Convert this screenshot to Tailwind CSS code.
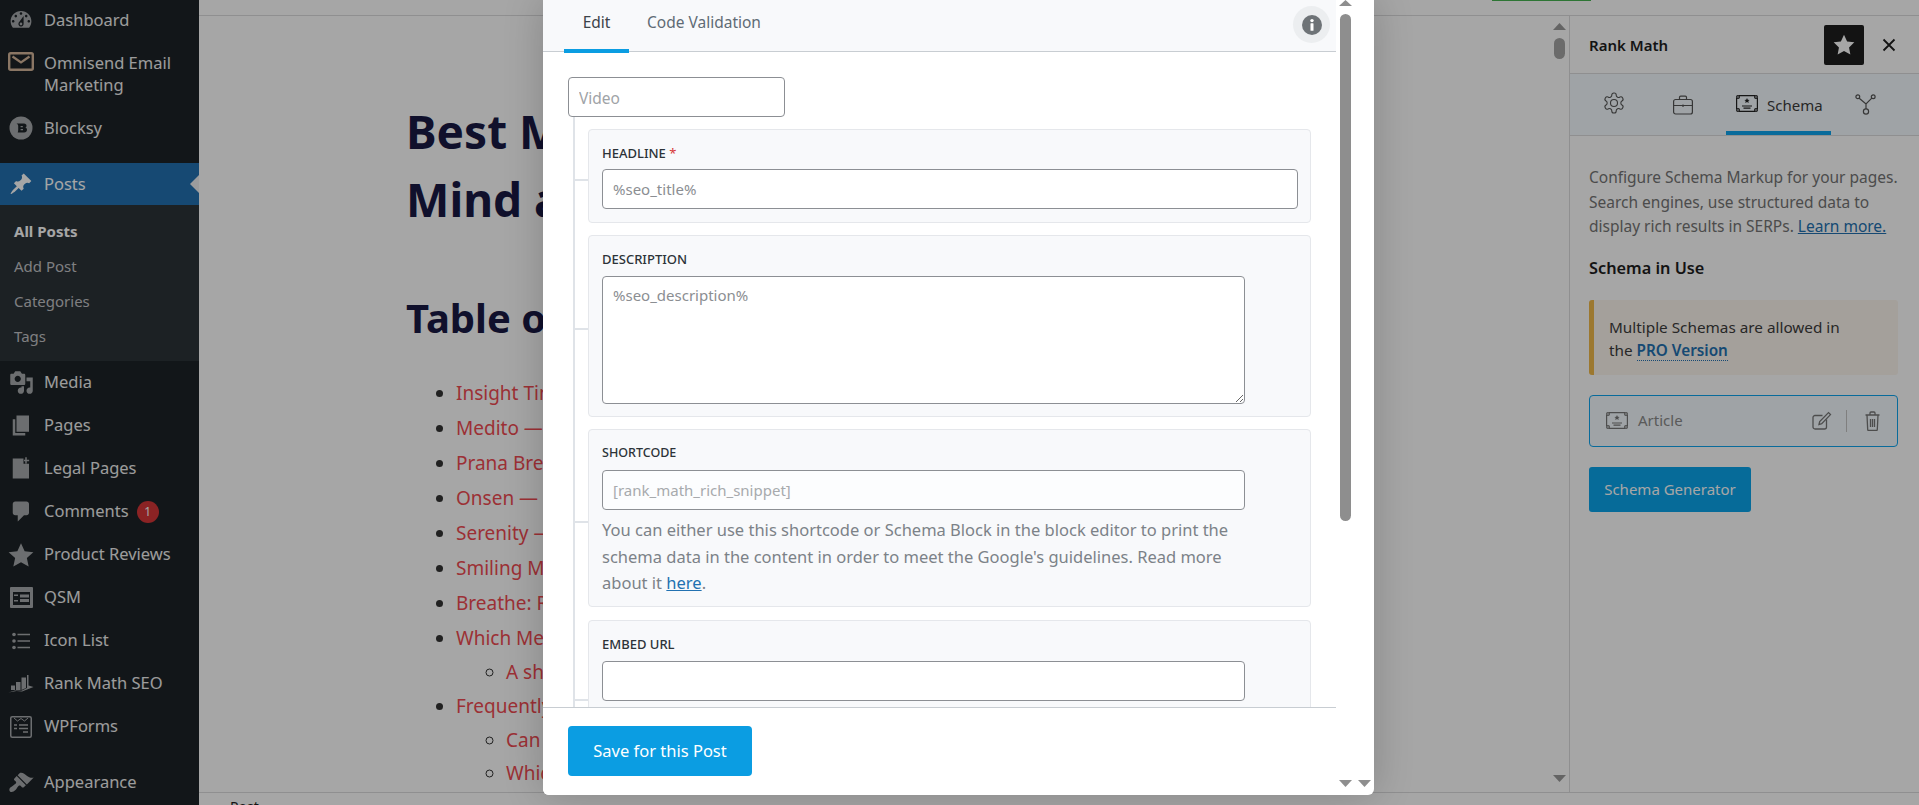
<!DOCTYPE html>
<html lang="en">
<head>
    <meta charset="UTF-8">
    <meta name="viewport" content="width=device-width, initial-scale=1.0">
    <title>Edit Post - Rank Math Schema</title>
    <script src="https://cdn.jsdelivr.net/npm/@tailwindcss/browser@4"></script>
</head>
<body class="h-[805px] overflow-hidden bg-white font-['Noto_Sans',sans-serif]">
<div class="relative flex h-[805px] w-[1919px] overflow-hidden">

    <!-- Admin menu -->
    <aside class="h-full w-[199px] shrink-0 overflow-hidden bg-[#1d2327] text-[16.5px] text-[#f0f0f0]">
        <a class="flex h-[40px] items-center">
            <span class="mr-[2px] flex w-[42px] justify-center"><svg class="h-[26px] w-[26px] fill-[#a7aaad]" viewBox="0 0 20 20"><path d="M3.76 16h12.48c1.1-1.37 1.76-3.11 1.76-5 0-4.42-3.58-8-8-8s-8 3.58-8 8c0 1.89.66 3.63 1.76 5zM10 4c.55 0 1 .45 1 1s-.45 1-1 1-1-.45-1-1 .45-1 1-1zM6 6c.55 0 1 .45 1 1s-.45 1-1 1-1-.45-1-1 .45-1 1-1zm8 0c.55 0 1 .45 1 1s-.45 1-1 1-1-.45-1-1 .45-1 1-1zm-5.37 5.55L12 7v6c0 1.1-.9 2-2 2s-2-.9-2-2c0-.57.24-1.08.63-1.45zM4 10c.55 0 1 .45 1 1s-.45 1-1 1-1-.45-1-1 .45-1 1-1zm12 0c.55 0 1 .45 1 1s-.45 1-1 1-1-.45-1-1 .45-1 1-1zm-5 3c0-.55-.45-1-1-1s-1 .45-1 1 .45 1 1 1 1-.45 1-1z"/></svg></span>
            Dashboard
        </a>
        <a class="mt-[2px] flex h-[64px] items-center leading-[22px]">
            <span class="mr-[2px] flex w-[42px] justify-center self-start pt-[10px]"><svg class="h-[19px] w-[26px]" viewBox="0 0 26 19" fill="none" stroke="#d4b69a"><rect x="1.2" y="1.2" width="23.6" height="16.6" rx="1.5" stroke-width="2.4"/><path d="M4.5 4.5 13 10.5 21.5 4.5" stroke-width="2.2"/></svg></span>
            <span>Omnisend Email<br>Marketing</span>
        </a>
        <a class="flex h-[44px] items-center">
            <span class="mr-[2px] flex w-[42px] justify-center"><svg class="h-[24px] w-[24px]" viewBox="0 0 24 24"><circle cx="12" cy="12" r="11.5" fill="#a7aaad"/><path d="M7.5 7.5h7.5c1.6 0 2.5 1 2.5 2.2 0 .9-.5 1.6-1.2 1.9 1 .3 1.7 1.1 1.7 2.2 0 1.5-1.1 2.7-2.8 2.7H8.7c.3-.8.5-1.6.5-2.4V9.8c0-.9-.6-1.7-1.7-2.3z" fill="#1d2327"/><path d="M11.6 10h2.2v1.2h-2.2zM11.6 13h2.4v1.3h-2.4z" fill="#a7aaad"/></svg></span>
            Blocksy
        </a>
        <a class="relative mt-[13px] flex h-[42px] items-center bg-[#2271b1] text-white">
            <span class="mr-[2px] flex w-[42px] justify-center"><svg class="h-[24px] w-[24px] fill-white" viewBox="0 0 20 20"><path d="M10.44 3.02l1.82-1.82 6.36 6.35-1.83 1.82c-1.05-.68-2.48-.57-3.41.36l-.75.75c-.92.93-1.04 2.35-.35 3.41l-1.83 1.82-2.41-2.41-2.8 2.79c-.42.42-3.38 2.71-3.8 2.29s1.86-3.39 2.28-3.81l2.79-2.79L4.1 9.36l1.83-1.82c1.05.69 2.48.57 3.4-.36l.75-.75c.93-.92 1.05-2.35.36-3.41z"/></svg></span>
            Posts
            <span class="absolute right-0 top-[12px] h-0 w-0 border-y-[9px] border-r-[9px] border-y-transparent border-r-[#f0f0f1]"></span>
        </a>
        <div class="bg-[#2c3338] pb-[7px] pt-[9px] text-[15px] text-[#c3c4c7]">
            <a class="block pl-[14px] font-bold leading-[35px] text-white">All Posts</a>
            <a class="block pl-[14px] leading-[35px]">Add Post</a>
            <a class="block pl-[14px] leading-[35px]">Categories</a>
            <a class="block pl-[14px] leading-[35px]">Tags</a>
        </div>
        <a class="flex h-[43px] items-center">
            <span class="mr-[2px] flex w-[42px] justify-center"><svg class="h-[25px] w-[25px] fill-[#a7aaad]" viewBox="0 0 20 20"><path d="M13 11V4c0-.55-.45-1-1-1h-1.67L9 1H5L3.67 3H2c-.55 0-1 .45-1 1v7c0 .55.45 1 1 1h10c.55 0 1-.45 1-1zM7 4.5c1.38 0 2.5 1.12 2.5 2.5S8.38 9.5 7 9.5 4.5 8.38 4.5 7 5.62 4.5 7 4.5zM14 6h5v10.5c0 1.38-1.12 2.5-2.5 2.5S14 17.88 14 16.5s1.12-2.5 2.5-2.5c.17 0 .34.02.5.05V9h-3V6zm-4 8.05V13h2v3.5c0 1.38-1.12 2.5-2.5 2.5S7 17.88 7 16.5 8.12 14 9.5 14c.17 0 .34.02.5.05z"/></svg></span>
            Media
        </a>
        <a class="flex h-[43px] items-center">
            <span class="mr-[2px] flex w-[42px] justify-center"><svg class="h-[25px] w-[25px] fill-[#a7aaad]" viewBox="0 0 20 20"><path d="M6 15V2h10v13H6zm-1 1h8v2H3V5h2v11z"/></svg></span>
            Pages
        </a>
        <a class="flex h-[43px] items-center">
            <span class="mr-[2px] flex w-[42px] justify-center"><svg class="h-[25px] w-[25px] fill-[#a7aaad]" viewBox="0 0 20 20"><path d="M3 2h8.6v4.2h4.4V18H3zM13 1h1.2v1.9h1.9v1.2h-1.9V6H13V4.100h-1V2.900h1z"/></svg></span>
            Legal Pages
        </a>
        <a class="flex h-[43px] items-center">
            <span class="mr-[2px] flex w-[42px] justify-center"><svg class="h-[25px] w-[25px] fill-[#a7aaad]" viewBox="0 0 20 20"><path d="M5 2h9c1.1 0 2 .9 2 2v7c0 1.1-.9 2-2 2h-2l-5 5v-5H5c-1.1 0-2-.9-2-2V4c0-1.1.9-2 2-2z"/></svg></span>
            Comments
            <span class="ml-[8px] flex h-[22px] w-[22px] items-center justify-center rounded-full bg-[#d63638] text-[12px] text-white">1</span>
        </a>
        <a class="flex h-[43px] items-center">
            <span class="mr-[2px] flex w-[42px] justify-center"><svg class="h-[26px] w-[26px] fill-[#a7aaad]" viewBox="0 0 20 20"><path d="M10 1l2.800 6.100 6.700.7-5 4.500 1.400 6.600L10 15.500l-5.900 3.400 1.400-6.600-5-4.500 6.700-.7z"/></svg></span>
            Product Reviews
        </a>
        <a class="flex h-[43px] items-center">
            <span class="mr-[2px] flex w-[42px] justify-center"><svg class="h-[21px] w-[23px]" viewBox="0 0 23 21"><rect width="23" height="21" rx="1" fill="#a7aaad"/><rect x="3" y="5" width="17" height="13" fill="#1d2327"/><path d="M4 7.500h4v1.500H4zM4 13h4v1.500H4zM10 7.500h9v3h-9zM10 12h9v3h-9z" fill="#a7aaad"/></svg></span>
            QSM
        </a>
        <a class="flex h-[43px] items-center">
            <span class="mr-[2px] flex w-[42px] justify-center"><svg class="h-[18px] w-[18px] fill-[#a7aaad]" viewBox="0 0 18 18"><circle cx="2" cy="2.500" r="1.800"/><circle cx="2" cy="9" r="1.800"/><circle cx="2" cy="15.500" r="1.800"/><path d="M5.500 1.700H18v1.500H5.500zM5.500 8.200H18v1.500H5.500zM5.500 14.700H18v1.500H5.500z"/></svg></span>
            Icon List
        </a>
        <a class="flex h-[43px] items-center">
            <span class="mr-[2px] flex w-[42px] justify-center"><svg class="h-[18px] w-[26px] fill-[#a7aaad]" viewBox="0 0 26 18"><path d="M3 10.500h4V15H3zM8 7h4.500v8H8zM13.500 2.500H18V13l-4.500 2zM19 0h1.500v10.500L25.500 12 14 16.500 8.500 16 .5 17.500 7 15.500l6.500 .2L19 13z"/></svg></span>
            Rank Math SEO
        </a>
        <a class="flex h-[43px] items-center">
            <span class="mr-[2px] flex w-[42px] justify-center"><svg class="h-[22px] w-[22px]" viewBox="0 0 22 22" fill="none" stroke="#a7aaad"><rect x=".75" y=".75" width="20.500" height="20.500" rx="1.500" stroke-width="1.500"/><path d="M4 2l3.500 3L11 2.500 14.500 5 18 2" stroke-width="1"/><path d="M4 9h3M9 9h9M4 12.500h3M9 12.500h9M13 16h5" stroke-width="1.600"/></svg></span>
            WPForms
        </a>
        <a class="mt-[13px] flex h-[43px] items-center">
            <span class="mr-[2px] flex w-[42px] justify-center"><svg class="h-[26px] w-[26px] fill-[#a7aaad]" viewBox="0 0 20 20"><path d="M14.480 11.060L7.410 3.990l1.500-1.500c.5-.56 2.300-.47 3.510.32 1.210.8 1.430 1.280 2.910 2.100 1.180.64 2.450 1.260 4.450.85zm-.71.71L6.700 4.700 4.930 6.470c-.39.39-.39 1.020 0 1.410l1.060 1.060c.39.39.39 1.030 0 1.420-.6.6-1.430 1.110-2.210 1.690-.35.26-.7.53-1.010.84C1.430 13.230.5 15.050 1.530 16.470c.99 1.020 2.860.29 4.180-1.050.31-.31.58-.66.85-1.020.57-.78 1.080-1.600 1.690-2.210.39-.39 1.020-.39 1.410 0l1.060 1.060c.39.39 1.020.39 1.410 0z"/></svg></span>
            Appearance
        </a>
    </aside>

    <!-- Editor -->
    <main class="flex h-full min-w-0 flex-1 flex-col bg-white">
        <div class="relative h-[16px] shrink-0 border-b border-[#dcdcde]">
            <span class="absolute left-[1293px] top-0 h-[1px] w-[99px] bg-[#46b450]"></span>
        </div>
        <div class="flex h-[776px] shrink-0">
            <div class="relative min-w-0 flex-1 overflow-hidden pl-[207px] pt-[81px] text-[#191944]">
                <h1 class="whitespace-nowrap text-[46px] font-bold leading-[68px]">Best Meditation Apps for Peace of<br>Mind and Focus</h1>
                <h2 class="mt-[58px] text-[40px] font-bold leading-[54px]">Table of Contents</h2>
                <ul class="mt-[31px] list-disc whitespace-nowrap pl-[50px] text-[19px] leading-[35px] text-[#f04b52] marker:text-[#333]">
                    <li>Insight Timer — Free Meditation</li>
                    <li>Medito — Free Mindfulness</li>
                    <li>Prana Breath — Calm and Focus</li>
                    <li>Onsen — Relaxing Soundscapes</li>
                    <li>Serenity — Guided Meditation</li>
                    <li>Smiling Mind — Daily Practice</li>
                    <li>Breathe: Relax and Focus</li>
                    <li>Which Meditation App Is Best?
                        <ul class="list-[circle] pl-[50px] leading-[33px]">
                            <li>A short comparison</li>
                        </ul>
                    </li>
                    <li>Frequently Asked Questions
                        <ul class="list-[circle] pl-[50px] leading-[33px]">
                            <li>Can an app teach meditation?</li>
                            <li>Which app is free?</li>
                        </ul>
                    </li>
                </ul>
                <svg class="absolute right-[3px] top-[7px] h-[7px] w-[13px] fill-[#9a9a9a]" viewBox="0 0 13 7"><path d="M6.500 0 13 7H0z"/></svg>
                <span class="absolute right-[4px] top-[22px] h-[21px] w-[11px] rounded-full bg-[#a5a5a5]"></span>
                <svg class="absolute bottom-[10px] right-[3px] h-[7px] w-[13px] fill-[#9a9a9a]" viewBox="0 0 13 7"><path d="M0 0h13L6.500 7z"/></svg>
            </div>

            <!-- Rank Math panel -->
            <section class="h-full w-[350px] shrink-0 border-l border-[#dcdcde] bg-white text-[#757575]">
                <header class="flex h-[58px] items-center border-b border-[#dcdcde] pl-[19px]">
                    <span class="pt-[2px] text-[15px] font-semibold text-[#1e1e1e]">Rank Math</span>
                    <span class="ml-auto flex h-[40px] w-[40px] items-center justify-center rounded-[2px] bg-[#1e1e1e]"><svg class="h-[24px] w-[24px] fill-white" viewBox="0 0 20 20"><path d="M10 1.500l2.600 5.500 6 .8-4.400 4.200 1.100 6L10 15.100 4.700 18l1.100-6-4.400-4.200 6-.8z"/></svg></span>
                    <svg class="ml-[18px] mr-[23px] h-[14px] w-[14px] stroke-[#1e1e1e]" viewBox="0 0 14 14" stroke-width="1.800"><path d="M1.500 1.500l11 11M12.500 1.500l-11 11"/></svg>
                </header>
                <nav class="relative flex h-[62px] items-center border-b border-[#dcdcde] bg-[#f4fbff] text-[15px] text-[#3c3c3c]">
                    <svg class="absolute left-[32px] top-[17px] h-[24px] w-[24px]" viewBox="0 0 24 24" fill="none" stroke="#555" stroke-width="1.100"><path d="M12.220 2h-.44a2 2 0 0 0-2 2v.18a2 2 0 0 1-1 1.730l-.43.25a2 2 0 0 1-2 0l-.15-.08a2 2 0 0 0-2.730.73l-.22.38a2 2 0 0 0 .73 2.730l.15.1a2 2 0 0 1 1 1.720v.51a2 2 0 0 1-1 1.740l-.15.09a2 2 0 0 0-.73 2.730l.22.38a2 2 0 0 0 2.730.73l.15-.08a2 2 0 0 1 2 0l.43.25a2 2 0 0 1 1 1.730V20a2 2 0 0 0 2 2h.44a2 2 0 0 0 2-2v-.18a2 2 0 0 1 1-1.730l.43-.25a2 2 0 0 1 2 0l.15.08a2 2 0 0 0 2.730-.73l.22-.39a2 2 0 0 0-.73-2.730l-.15-.08a2 2 0 0 1-1-1.740v-.5a2 2 0 0 1 1-1.740l.15-.09a2 2 0 0 0 .73-2.730l-.22-.38a2 2 0 0 0-2.730-.73l-.15.08a2 2 0 0 1-2 0l-.43-.25a2 2 0 0 1-1-1.730V4a2 2 0 0 0-2-2z"/><circle cx="12" cy="12" r="3.500"/></svg>
                    <svg class="absolute left-[103px] top-[21px] h-[20px] w-[20px]" viewBox="0 0 20 20" fill="none" stroke="#555" stroke-width="1.200"><rect x=".6" y="4.500" width="18.800" height="14.500" rx="2"/><path d="M6.500 4.500V2.300c0-.7.500-1.200 1.200-1.200h4.600c.7 0 1.200.5 1.200 1.200v2.200M.6 10.500h18.800"/><path d="M10 9.500v2.500"/></svg>
                    <svg class="absolute left-[166px] top-[21px] h-[17px] w-[22px]" viewBox="0 0 22 17" fill="none" stroke="#222" stroke-width="1.200"><path d="M3 .6h16M3 16.400h16M.6 3v11M21.400 3v11"/><circle cx="2" cy="2" r="1.400"/><circle cx="20" cy="2" r="1.400"/><circle cx="2" cy="15" r="1.400"/><circle cx="20" cy="15" r="1.400"/><path d="M6 11h10M7.500 13.200h7"/><path d="M11 3l.8 1.700 1.800.2-1.300 1.200.4 1.800L11 7l-1.700 .9.4-1.800-1.300-1.200 1.800-.2z" fill="#222" stroke="none"/></svg>
                    <span class="absolute left-[197px] top-[20px] leading-[22px]">Schema</span>
                    <span class="absolute bottom-0 left-[156px] h-[4px] w-[105px] bg-[#0fa5ee]"></span>
                    <svg class="absolute left-[285px] top-[20px] h-[21px] w-[21px]" viewBox="0 0 21 21" fill="none" stroke="#555" stroke-width="1.200"><circle cx="2.800" cy="2.800" r="1.900"/><circle cx="18.200" cy="2.800" r="1.900"/><circle cx="11" cy="17.500" r="2.600"/><path d="M4.200 4.200 11 10l5.800-5.800M11 10v5"/></svg>
                </nav>
                <div class="pl-[19px] pr-[10px] pt-[29px]">
                    <p class="text-[15.500px] leading-[24.500px]">Configure Schema Markup for your pages. Search engines, use structured data to display rich results in SERPs. <a class="text-[#2271b1] underline">Learn more.</a></p>
                    <h3 class="mt-[17px] text-[16.300px] font-semibold leading-[24px] text-[#1e1e1e]">Schema in Use</h3>
                    <div class="mt-[20px] h-[75px] w-[309px] rounded-[3px] border-l-[5px] border-[#f0b849] bg-[#fcf6ee] pl-[15px] pt-[16px] text-[15.300px] leading-[23px] text-[#3c3c3c]">
                        Multiple Schemas are allowed in<br>the <a class="border-b border-dotted border-[#2271b1] font-semibold text-[#2271b1]">PRO Version</a>
                    </div>
                    <div class="mt-[20px] flex h-[52px] w-[309px] items-center rounded-[4px] border border-[#0fa5ee] bg-[#f4fbff] pl-[16px] text-[15px] text-[#8a8a8a]">
                        <svg class="h-[17px] w-[22px]" viewBox="0 0 22 17" fill="none" stroke="#777" stroke-width="1.200"><path d="M3 .6h16M3 16.400h16M.6 3v11M21.400 3v11"/><circle cx="2" cy="2" r="1.400"/><circle cx="20" cy="2" r="1.400"/><circle cx="2" cy="15" r="1.400"/><circle cx="20" cy="15" r="1.400"/><path d="M6 11h10M7.500 13.200h7"/><path d="M11 3l.8 1.700 1.800.2-1.300 1.200.4 1.800L11 7l-1.700 .9.4-1.800-1.300-1.200 1.800-.2z" fill="#777" stroke="none"/></svg>
                        <span class="ml-[10px]">Article</span>
                        <svg class="ml-auto h-[20px] w-[20px]" viewBox="0 0 20 20" fill="none" stroke="#777" stroke-width="1.300"><path d="M14.500 8.500V16a2 2 0 0 1-2 2H3a2 2 0 0 1-2-2V6.500a2 2 0 0 1 2-2h7.500"/><path d="M7 13.500l.7-3L16.500 1.600l2 2-8.800 9z"/></svg>
                        <span class="ml-[14px] h-[22px] w-px bg-[#c4c4c4]"></span>
                        <svg class="ml-[18px] mr-[17px] h-[20px] w-[15px]" viewBox="0 0 15 20" fill="none" stroke="#777" stroke-width="1.300"><path d="M.5 4h14M2 4l.7 14.500c0 .6.500 1 1 1h7.600c.5 0 1-.4 1-1L13 4M5 4V2c0-.6.400-1 1-1h3c.6 0 1 .4 1 1v2M5.500 8v8M7.500 8v8M9.500 8v8"/></svg>
                    </div>
                    <button class="mt-[20px] h-[45px] w-[162px] rounded-[3px] bg-[#0aa5ec] text-[15px] text-white">Schema Generator</button>
                </div>
            </section>
        </div>
        <div class="h-[13px] shrink-0 overflow-hidden border-t border-[#dcdcde] pl-[31px] text-[14px] leading-[28px] text-[#1e1e1e]">Post</div>
    </main>

    <!-- Overlay -->
    <div class="absolute inset-0 bg-black/35"></div>

    <!-- Schema builder modal -->
    <div class="absolute left-[543px] top-0 flex h-[795px] w-[831px] overflow-hidden rounded-b-[6px] bg-white shadow-[0_0_40px_rgba(0,0,0,0.2)]">
        <div class="flex h-full w-[793px] flex-col">
            <div class="relative flex h-[52px] shrink-0 items-start border-b border-[#c8cdd2] bg-[#f8f9fb] text-[15.500px] leading-[45px]">
                <a class="relative ml-[21px] h-[52px] w-[65px] text-center text-[#3c434a]">Edit<span class="absolute bottom-[-1px] left-0 h-[4px] w-[65px] bg-[#0b9de2]"></span></a>
                <a class="ml-[18px] text-[#5f6b75]">Code Validation</a>
                <span class="absolute left-[750px] top-[6px] flex h-[37px] w-[37px] items-center justify-center rounded-full bg-[#eceef0]">
                    <svg class="h-[20px] w-[20px]" viewBox="0 0 20 20"><circle cx="10" cy="10" r="10" fill="#6e7377"/><rect x="8.500" y="8.300" width="3" height="7.500" rx=".5" fill="#fff"/><circle cx="10" cy="5.600" r="1.700" fill="#fff"/></svg>
                </span>
            </div>
            <div class="min-h-0 flex-1 overflow-hidden pl-[25px] pt-[25px]">
                <input class="h-[40px] w-[217px] rounded-[4px] border border-[#8c8f94] bg-white px-[10px] pt-[2px] text-[15.500px] placeholder:text-[#a0a3a7]" placeholder="Video">
                <div class="ml-[5px] w-[739px] border-l-2 border-[#dfe3e8] pl-[13px] pt-[12px]">
                    <div class="relative mb-[12px] w-[723px] rounded-[4px] border border-[#e5e7eb] bg-[#f8f9fb] px-[13px] pb-[13px] pt-[13px]">
                        <span class="absolute left-[-15px] top-[49px] h-[2px] w-[14px] bg-[#dfe3e8]"></span>
                        <label class="mb-[6px] block text-[13px] font-medium uppercase leading-[20px] text-[#2c3338]">Headline <span class="font-normal text-[#d63638]">*</span></label>
                        <input class="h-[40px] w-[696px] rounded-[4px] border border-[#8c8f94] bg-white px-[10px] text-[15px] placeholder:text-[#8b8e92]" placeholder="%seo_title%">
                    </div>
                    <div class="relative mb-[12px] w-[723px] rounded-[4px] border border-[#e5e7eb] bg-[#f8f9fb] px-[13px] pb-[12px] pt-[13px]">
                        <span class="absolute left-[-15px] top-[92px] h-[2px] w-[14px] bg-[#dfe3e8]"></span>
                        <label class="mb-[7px] block text-[13px] font-medium uppercase leading-[20px] text-[#2c3338]">Description</label>
                        <textarea class="block h-[128px] w-[643px] rounded-[4px] border border-[#8c8f94] bg-white px-[10px] py-[7px] text-[15px] placeholder:text-[#8b8e92]" placeholder="%seo_description%"></textarea>
                    </div>
                    <div class="relative mb-[13px] w-[723px] rounded-[4px] border border-[#e5e7eb] bg-[#f8f9fb] px-[13px] pb-[9px] pt-[13px]">
                        <span class="absolute left-[-15px] top-[91px] h-[2px] w-[14px] bg-[#dfe3e8]"></span>
                        <label class="mb-[7px] block text-[12.500px] font-medium uppercase leading-[20px] text-[#2c3338]">Shortcode</label>
                        <input class="block h-[40px] w-[643px] rounded-[4px] border border-[#8c8f94] bg-[#fcfdfe] px-[10px] text-[15px] text-[#a7aaad]" value="[rank_math_rich_snippet]" readonly>
                        <p class="mt-[7px] w-[665px] text-[16.500px] leading-[26.500px] text-[#7c8288]">You can either use this shortcode or Schema Block in the block editor to print the schema data in the content in order to meet the Google's guidelines. Read more about it <a class="text-[#2271b1] underline">here</a>.</p>
                    </div>
                    <div class="relative w-[723px] rounded-[4px] border border-[#e5e7eb] bg-[#f8f9fb] px-[13px] pb-[40px] pt-[13px]">
                        <span class="absolute left-[-15px] top-[78px] h-[2px] w-[14px] bg-[#dfe3e8]"></span>
                        <label class="mb-[7px] block text-[13px] font-medium uppercase leading-[20px] text-[#2c3338]">Embed URL</label>
                        <input class="block h-[40px] w-[643px] rounded-[4px] border border-[#8c8f94] bg-white px-[10px] text-[15px]">
                    </div>
                </div>
            </div>
            <div class="h-[88px] shrink-0 border-t border-[#c8cdd2] bg-white pl-[25px] pt-[18px]">
                <button class="h-[50px] w-[184px] rounded-[4px] bg-[#0b9de2] text-[16.500px] text-white">Save for this Post</button>
            </div>
        </div>
        <svg class="absolute left-[796px] top-0 h-[6px] w-[13px] fill-[#8e8e8e]" viewBox="0 0 13 6"><path d="M6.500 0 13 6H0z"/></svg>
        <span class="absolute left-[797px] top-[14px] h-[507px] w-[11px] rounded-full bg-[#8e8e8e]"></span>
        <svg class="absolute left-[796px] top-[780px] h-[7px] w-[13px] fill-[#8e8e8e]" viewBox="0 0 13 7"><path d="M0 0h13L6.500 7z"/></svg>
        <svg class="absolute left-[815px] top-[780px] h-[7px] w-[13px] fill-[#8e8e8e]" viewBox="0 0 13 7"><path d="M0 0h13L6.500 7z"/></svg>
    </div>
</div>
</body>
</html>
